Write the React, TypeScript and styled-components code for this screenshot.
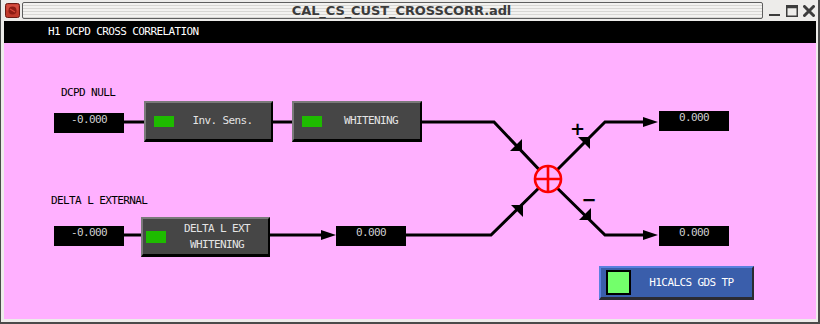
import React from "react";
import styled, { createGlobalStyle } from "styled-components";

// canvas origin in page coordinates; nodes are placed in page coordinates
const ORIGIN_X = 4;
const ORIGIN_Y = 43;

const pixelFont = `"DejaVu Sans Mono", "Liberation Mono", monospace`;

const GlobalStyle = createGlobalStyle`
  html, body {
    margin: 0;
    padding: 0;
    background: #edecea;
  }
  body {
    width: 820px;
    height: 324px;
    overflow: hidden;
  }
`;

const Window = styled.div`
  width: 820px;
  height: 324px;
  box-sizing: border-box;
  display: flex;
  flex-direction: column;
  background: #edecea;
  border-left: 1px solid #4a4a4a;
  border-right: 2px solid #4a4a4a;
  border-bottom: 2px solid #4a4a4a;
  padding: 0 2px 3px 3px;
`;

const TitleBar = styled.div`
  height: 21px;
  flex-shrink: 0;
  display: flex;
  align-items: center;
`;

const AppIcon = styled.svg`
  width: 15px;
  height: 15px;
  margin-left: 1px;
  flex-shrink: 0;
`;

const TitleField = styled.div`
  flex: 1;
  height: 17px;
  margin-left: 2px;
  box-sizing: border-box;
  border: 1px solid #5e5e5e;
  border-radius: 2px;
  background: repeating-linear-gradient(to bottom, #f3f2f0 0 2px, #d8d7d4 2px 3px);
  display: flex;
  align-items: center;
  justify-content: center;
  padding-left: 18px;
  font-family: "DejaVu Sans", "Liberation Sans", sans-serif;
  font-weight: bold;
  font-size: 13px;
  color: #3c3c3c;
  letter-spacing: -0.1px;
`;

const Controls = styled.div`
  width: 53px;
  flex-shrink: 0;
  display: flex;
  align-items: center;
  gap: 5px;
  padding-left: 6px;
  box-sizing: border-box;
`;

const ControlIcon = styled.svg`
  width: 12px;
  height: 12px;
  display: block;
`;

const Header = styled.div`
  height: 22px;
  flex-shrink: 0;
  background: #000;
  color: #fff;
  font-family: ${pixelFont};
  font-size: 11px;
  letter-spacing: -0.6px;
  line-height: 22px;
  padding-left: 44px;
  white-space: pre;
`;

const Canvas = styled.div`
  flex: 1;
  position: relative;
  background: #ffb0ff;
  overflow: hidden;
`;

const Wires = styled.svg`
  position: absolute;
  left: 0;
  top: 0;
  width: 812px;
  height: 276px;
`;

type At = { $x: number; $y: number };

const Label = styled.div<At>`
  position: absolute;
  left: ${(p) => p.$x - ORIGIN_X}px;
  top: ${(p) => p.$y - ORIGIN_Y}px;
  font-family: ${pixelFont};
  font-size: 11px;
  letter-spacing: -0.6px;
  line-height: 12px;
  color: #000;
  white-space: pre;
`;

const ValueBox = styled.div<At>`
  position: absolute;
  left: ${(p) => p.$x - ORIGIN_X}px;
  top: ${(p) => p.$y - ORIGIN_Y}px;
  width: 70px;
  height: 20px;
  background: #000;
  color: #cfcfcf;
  text-align: center;
  font-family: ${pixelFont};
  font-size: 11px;
  letter-spacing: -0.6px;
  line-height: 13px;
`;

const RelatedButton = styled.div<At & { $w: number; $h: number; $pad: number }>`
  position: absolute;
  left: ${(p) => p.$x - ORIGIN_X}px;
  top: ${(p) => p.$y - ORIGIN_Y}px;
  width: ${(p) => p.$w}px;
  height: ${(p) => p.$h}px;
  box-sizing: border-box;
  background: #464646;
  border-top: 2px solid #7a7a7a;
  border-left: 2px solid #7a7a7a;
  border-right: 2px solid #000;
  border-bottom: 3px solid #000;
  display: flex;
  align-items: center;
  padding-left: ${(p) => p.$pad}px;
`;

const Indicator = styled.div<{ $h: number }>`
  width: 20px;
  height: ${(p) => p.$h}px;
  flex-shrink: 0;
  background: #1ebb00;
`;

const ButtonText = styled.div`
  flex: 1;
  text-align: center;
  color: #e4e4e4;
  font-family: ${pixelFont};
  font-size: 11px;
  letter-spacing: -0.6px;
  line-height: 16px;
  white-space: pre;
`;

const ShellButton = styled.div<At>`
  position: absolute;
  left: ${(p) => p.$x - ORIGIN_X}px;
  top: ${(p) => p.$y - ORIGIN_Y}px;
  width: 155px;
  height: 34px;
  box-sizing: border-box;
  background: #3a5eab;
  border-top: 2px solid #5a80df;
  border-left: 2px solid #5a80df;
  border-right: 2px solid #2b2b33;
  border-bottom: 3px solid #2b2b33;
  display: flex;
  align-items: center;
  padding-left: 5px;
`;

const ShellSwatch = styled.div`
  width: 25px;
  height: 25px;
  box-sizing: border-box;
  flex-shrink: 0;
  background: #73ff6b;
  border: 2px solid #000;
`;

const ShellText = styled(ButtonText)`
  color: #fff;
`;

const wire = { stroke: "#000", strokeWidth: 3, fill: "none" } as const;

function Arrow({ points }: { points: string }) {
  return <polygon points={points} fill="#000" />;
}

export default function App() {
  return (
    <>
      <GlobalStyle />
      <Window>
        <TitleBar>
          <AppIcon viewBox="0 0 15 15">
            <rect x="0.5" y="0.5" width="14" height="14" rx="2" fill="#c0392b" stroke="#6b1a14" />
            <rect x="1.5" y="1.5" width="12" height="6" rx="1" fill="#e25a4c" opacity="0.6" />
            <circle cx="7.5" cy="7.5" r="4" fill="#8e1c14" />
            <path d="M5 6 L10 9" stroke="#d9473a" strokeWidth="1.2" />
          </AppIcon>
          <TitleField>CAL_CS_CUST_CROSSCORR.adl</TitleField>
          <Controls>
            <ControlIcon viewBox="0 0 12 12">
              <rect x="0" y="9" width="11" height="2" fill="#3c3c3c" />
            </ControlIcon>
            <ControlIcon viewBox="0 0 12 12">
              <rect x="0.75" y="0.75" width="10.5" height="10.5" fill="none" stroke="#3c3c3c" strokeWidth="1.5" />
              <rect x="0.75" y="0.75" width="10.5" height="2.5" fill="#3c3c3c" />
            </ControlIcon>
            <ControlIcon viewBox="0 0 12 12">
              <path d="M1.5 1.5 L10.5 10.5 M10.5 1.5 L1.5 10.5" stroke="#3c3c3c" strokeWidth="3" strokeLinecap="round" />
            </ControlIcon>
          </Controls>
        </TitleBar>

        <Header>H1 DCPD CROSS CORRELATION</Header>

        <Canvas>
          <Wires viewBox="4 43 812 276">
            {/* DCPD NULL path */}
            <path d="M124 122 H146" {...wire} />
            <path d="M273 122 H294" {...wire} />
            <path d="M422 122 H494 L548 179" {...wire} />
            <Arrow points="522,151 510,151 522,139" />

            {/* DELTA L EXTERNAL path */}
            <path d="M124 235 H143" {...wire} />
            <path d="M270 235 H323" {...wire} />
            <Arrow points="336,235 321,230 321,240" />
            <path d="M406 235 H491 L548 179" {...wire} />
            <Arrow points="523,205 511,205 523,217" />

            {/* outputs */}
            <path d="M548 179 L605 122 H645" {...wire} />
            <Arrow points="590,137 578,137 590,149" />
            <Arrow points="658,122 643,117 643,127" />
            <path d="M548 179 L605 235 H645" {...wire} />
            <Arrow points="591,220 579,220 591,208" />
            <Arrow points="658,235 643,230 643,240" />

            {/* summing junction */}
            <circle cx="548" cy="179" r="13" fill="#ffb0ff" stroke="#fd0000" strokeWidth="2.6" />
            <path d="M535 179 H561 M548 166 V192" stroke="#fd0000" strokeWidth="2.6" />

            <text x="577.5" y="134.5" textAnchor="middle" fontFamily="DejaVu Sans, sans-serif" fontWeight="bold" fontSize="18" fill="#000">+</text>
            <text x="589" y="205.5" textAnchor="middle" fontFamily="DejaVu Sans, sans-serif" fontWeight="bold" fontSize="18" fill="#000">−</text>
          </Wires>

          <Label $x={61} $y={87}>DCPD NULL</Label>
          <ValueBox $x={54} $y={113}>-0.000</ValueBox>
          <RelatedButton $x={144} $y={101} $w={129} $h={41} $pad={8}>
            <Indicator $h={11} />
            <ButtonText>Inv. Sens.</ButtonText>
          </RelatedButton>
          <RelatedButton $x={292} $y={101} $w={130} $h={41} $pad={8}>
            <Indicator $h={11} />
            <ButtonText>WHITENING</ButtonText>
          </RelatedButton>
          <ValueBox $x={659} $y={111}>0.000</ValueBox>

          <Label $x={51} $y={195}>DELTA L EXTERNAL</Label>
          <ValueBox $x={54} $y={226}>-0.000</ValueBox>
          <RelatedButton $x={141} $y={217} $w={129} $h={40} $pad={3}>
            <Indicator $h={12} />
            <ButtonText>
              DELTA L EXT
              <br />
              WHITENING
            </ButtonText>
          </RelatedButton>
          <ValueBox $x={336} $y={226}>0.000</ValueBox>
          <ValueBox $x={659} $y={226}>0.000</ValueBox>

          <ShellButton $x={599} $y={266}>
            <ShellSwatch />
            <ShellText>H1CALCS GDS TP</ShellText>
          </ShellButton>
        </Canvas>
      </Window>
    </>
  );
}
